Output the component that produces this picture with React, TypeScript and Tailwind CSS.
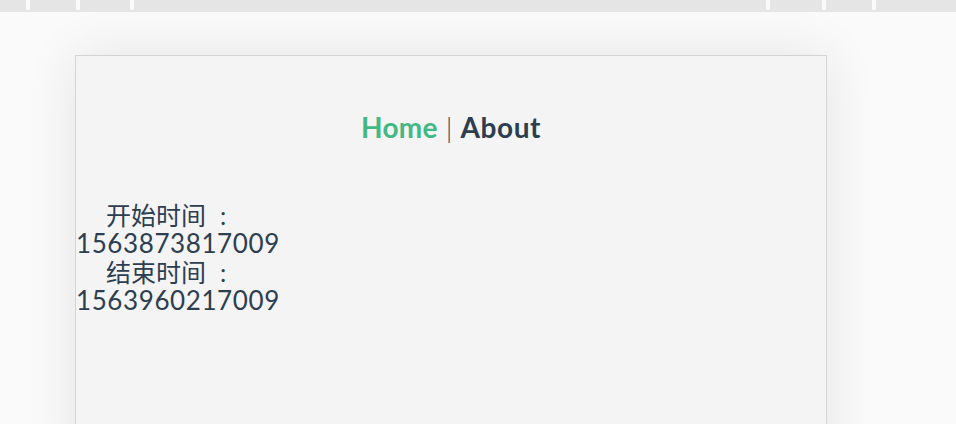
import React from "react";

const latin = "font-['Lato','Noto_Sans_CJK_SC',sans-serif]";

function Tick({ className = "" }: { className?: string }) {
  return <div className={`w-[4px] h-[10px] bg-[#fafafa] ${className}`} />;
}

export default function App() {
  return (
    <div className={`min-h-screen bg-[#fafafa] overflow-hidden ${latin}`}>
      <div className="h-[12px] bg-[#e5e5e5] flex items-start">
        <Tick className="ml-[26px]" />
        <Tick className="ml-[46px]" />
        <Tick className="ml-[50px]" />
        <Tick className="ml-auto" />
        <Tick className="ml-[52px]" />
        <Tick className="ml-[46px] mr-[80px]" />
      </div>
      <div className="ml-[75px] mt-[43px] w-[752px] h-[420px] border border-[#d4d4d4] bg-[#f4f4f4] shadow-[0_0_50px_rgba(0,0,0,0.09)] text-[#2c3e50]">
        <div className="pt-[55px] text-center text-[28px] leading-[33.6px] whitespace-nowrap">
          <span className="font-bold text-[#42b983] tracking-[0.3px]">Home</span>
          <span className="px-[8px] font-light">|</span>
          <span className="font-bold tracking-[0.6px]">About</span>
        </div>
        <div className="mt-[56px]">
          <div className="h-[28.5px] leading-[28.5px] text-[25px] pl-[30px] whitespace-nowrap">
            开始时间<span className="ml-[14px]">:</span>
          </div>
          <div className="h-[28.5px] leading-[28.5px] text-[26px] tracking-[0.6px] whitespace-nowrap">
            1563873817009
          </div>
          <div className="h-[28.5px] leading-[28.5px] text-[25px] pl-[30px] whitespace-nowrap">
            结束时间<span className="ml-[14px]">:</span>
          </div>
          <div className="h-[28.5px] leading-[28.5px] text-[26px] tracking-[0.6px] whitespace-nowrap">
            1563960217009
          </div>
        </div>
      </div>
    </div>
  );
}
